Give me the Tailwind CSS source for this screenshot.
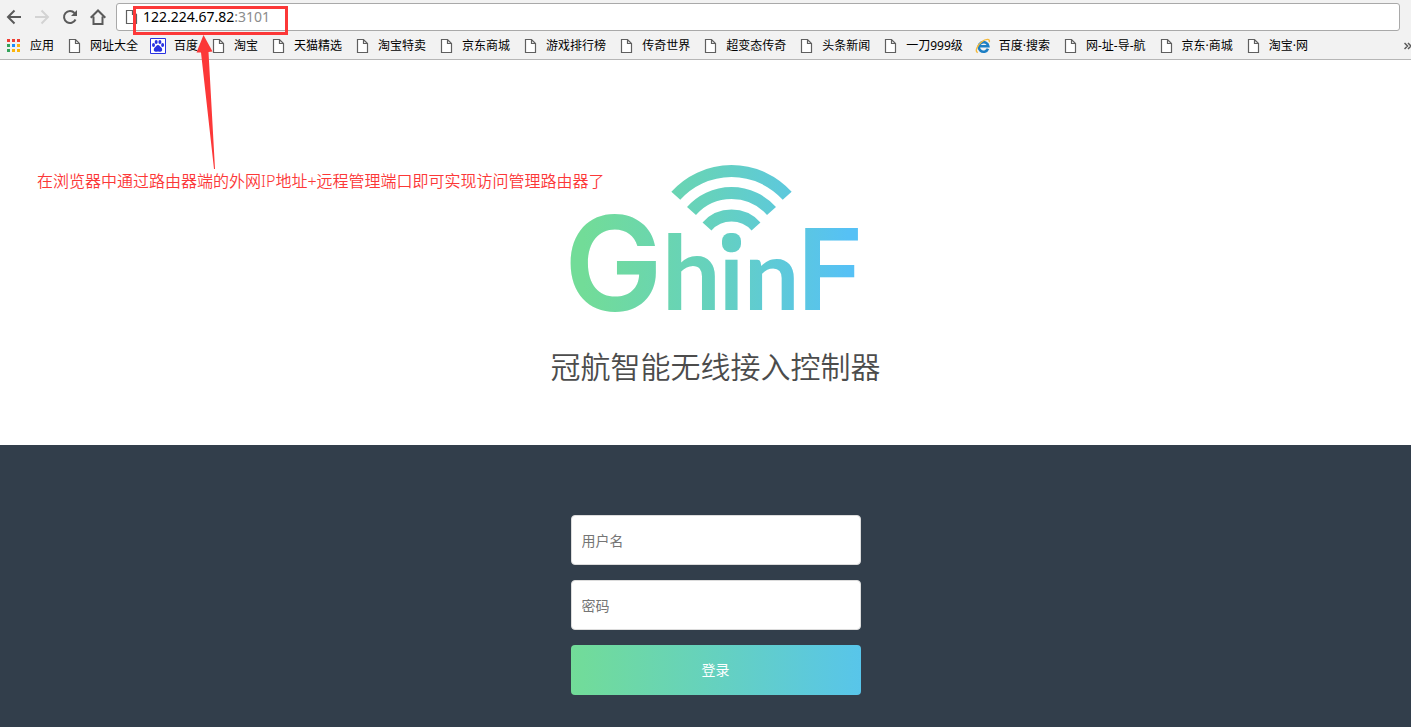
<!DOCTYPE html>
<html lang="zh-CN">
	<head>
		<meta charset="UTF-8" />
		<meta name="viewport" content="width=device-width, initial-scale=1.0" />
		<script src="https://cdn.jsdelivr.net/npm/@tailwindcss/browser@4"></script>
		<title>冠航智能无线接入控制器</title>
	</head>

	<body
		class="relative flex min-h-screen flex-col overflow-x-hidden bg-white font-['Noto_Sans','Noto_Sans_CJK_SC',sans-serif]"
	>
		<!-- shared bookmark page icon -->
		<svg class="hidden">
			<symbol id="page" viewBox="0 0 16 16">
				<path d="M3.500 1.500h6l4 4v9h-10z M9.500 1.500v4h4" fill="#fff" stroke="#5f5f5f" stroke-width="1.200" />
			</symbol>
		</svg>

		<header class="h-15 border-b border-[#b6b6b6] bg-[#f2f2f2]">
			<div class="flex items-center pt-[3px] pr-[11px] pl-1.5">
				<nav class="flex w-[110px] gap-3 text-[#5a5a5a]">
					<button aria-label="后退">
						<svg class="size-4" viewBox="0 0 16 16" fill="none" stroke="currentColor" stroke-width="2">
							<path d="M15 8H2.500M8.500 1.500L2 8l6.500 6.500" />
						</svg>
					</button>
					<button aria-label="前进" class="text-[#d3d3d3]" disabled>
						<svg class="size-4" viewBox="0 0 16 16" fill="none" stroke="currentColor" stroke-width="2">
							<path d="M1 8h12.500M7.500 1.500L14 8l-6.500 6.500" />
						</svg>
					</button>
					<button aria-label="刷新">
						<svg class="size-4" viewBox="0 0 16 16" fill="none" stroke="currentColor" stroke-width="2">
							<path d="M13.500 10.500A6 6 0 1 1 12.500 4" />
							<path d="M15 1v6H9z" fill="currentColor" stroke="none" />
						</svg>
					</button>
					<button aria-label="主页">
						<svg class="size-4" viewBox="0 0 16 16" fill="none" stroke="currentColor" stroke-width="2">
							<path d="M0.700 8.800L8 1.500l7.300 7.300M3.500 7.500V15h9V7.500" />
						</svg>
					</button>
				</nav>
				<div class="flex h-7 flex-1 items-center rounded-[3px] border border-[#a9a9a9] bg-white pl-1.5">
					<svg class="size-4"><use href="#page" /></svg>
					<a href="#" class="pl-1 text-sm leading-5 text-black"
						>122.224.67.82<span class="text-[#8c8c8c]">:3101</span></a
					>
				</div>
			</div>

			<nav class="flex h-[29px] items-center gap-3 pl-1.5 text-xs whitespace-nowrap text-black">
				<a href="#" class="flex items-center gap-2">
					<svg class="size-4" viewBox="0 0 16 16">
						<path d="M1 1h3v3H1zM6 1h3v3H6zM11 1h3v3h-3z" fill="#ee4035" />
						<path d="M1 6h3v3H1zM1 11h3v3H1z" fill="#33a35a" />
						<path d="M6 6h3v3H6z" fill="#1a8cff" />
						<path d="M11 6h3v3h-3zM6 11h3v3H6zM11 11h3v3h-3z" fill="#fbb40b" />
					</svg>
					应用
				</a>
				<a href="#" class="flex items-center gap-2"><svg class="size-4"><use href="#page" /></svg>网址大全</a>
				<a href="#" class="flex items-center gap-2">
					<svg class="size-4" viewBox="0 0 16 16" fill="#2932e1">
						<path d="M.5.500h15v15H.5z" fill="#fff" stroke="#2932e1" />
						<ellipse cx="3.500" cy="7" rx="1.500" ry="2" />
						<ellipse cx="6.200" cy="4" rx="1.500" ry="2" />
						<ellipse cx="9.900" cy="4" rx="1.500" ry="2" />
						<ellipse cx="12.600" cy="7" rx="1.500" ry="2" />
						<path d="M8 7c1.600 0 2 1.600 3.200 2.600 1.600 1.400 1.200 4.200-.8 4.200-1 0-1.500-.3-2.400-.3s-1.400.3-2.400.3c-2 0-2.400-2.800-.8-4.200C6 8.600 6.400 7 8 7z" />
					</svg>
					百度
				</a>
				<a href="#" class="flex items-center gap-2"><svg class="size-4"><use href="#page" /></svg>淘宝</a>
				<a href="#" class="flex items-center gap-2"><svg class="size-4"><use href="#page" /></svg>天猫精选</a>
				<a href="#" class="flex items-center gap-2"><svg class="size-4"><use href="#page" /></svg>淘宝特卖</a>
				<a href="#" class="flex items-center gap-2"><svg class="size-4"><use href="#page" /></svg>京东商城</a>
				<a href="#" class="flex items-center gap-2"><svg class="size-4"><use href="#page" /></svg>游戏排行榜</a>
				<a href="#" class="flex items-center gap-2"><svg class="size-4"><use href="#page" /></svg>传奇世界</a>
				<a href="#" class="flex items-center gap-2"><svg class="size-4"><use href="#page" /></svg>超变态传奇</a>
				<a href="#" class="flex items-center gap-2"><svg class="size-4"><use href="#page" /></svg>头条新闻</a>
				<a href="#" class="flex items-center gap-2"><svg class="size-4"><use href="#page" /></svg>一刀999级</a>
				<a href="#" class="flex items-center gap-2">
					<svg class="size-4" viewBox="0 0 16 16" fill="none">
						<path d="M13 10.800A4.800 4.800 0 1 1 13.300 8.300H5" stroke="#1d7fc4" stroke-width="2.600" />
						<path d="M2.800 14.500C-.5 14 2 7.500 6.500 4S15.500.500 14.200 4.200" stroke="#f3b93c" stroke-width="1.400" />
					</svg>
					百度·搜索
				</a>
				<a href="#" class="flex items-center gap-2"><svg class="size-4"><use href="#page" /></svg>网-址-导-航</a>
				<a href="#" class="flex items-center gap-2"><svg class="size-4"><use href="#page" /></svg>京东·商城</a>
				<a href="#" class="flex items-center gap-2"><svg class="size-4"><use href="#page" /></svg>淘宝·网</a>
				<button class="ml-auto" aria-label="更多书签">
					<svg class="h-2 w-[7px]" viewBox="0 0 7 8" fill="none" stroke="#5a5a5a" stroke-width="1.500">
						<path d="M.5 1l3 3-3 3M4 1l3 3-3 3" />
					</svg>
				</button>
			</nav>
		</header>

		<section class="flex h-[385px] flex-col items-center pt-[105px] pl-5">
			<svg class="h-[147px] w-[294px] overflow-visible" viewBox="569 165 294 147" role="img" aria-label="GhinF">
				<defs>
					<linearGradient id="brand" gradientUnits="userSpaceOnUse" x1="569" y1="0" x2="863" y2="0">
						<stop offset="0.050" stop-color="#72dc98" />
						<stop offset="0.500" stop-color="#65d1bf" />
						<stop offset="0.950" stop-color="#56c1f5" />
					</linearGradient>
				</defs>
				<g fill="none" stroke="url(#brand)" stroke-width="12">
					<path d="M675.800 195.800A75 75 0 0 1 787.200 195.800" />
					<path d="M691.500 211A53.500 53.500 0 0 1 771.500 211" />
					<path d="M707 226.500A33 33 0 0 1 756 226.500" />
				</g>
				<g fill="url(#brand)" class="font-['Lato',sans-serif] font-bold">
					<text x="564" y="311" font-size="132" class="font-['Inter',sans-serif] font-semibold">G</text>
					<text x="662" y="310" font-size="104">h</text>
					<text x="719" y="310" font-size="98">i</text>
					<text x="744" y="310" font-size="98">n</text>
					<text x="797" y="310" font-size="113" class="font-['Inter',sans-serif] font-semibold">F</text>
					<rect x="722" y="233" width="19" height="19" rx="8" />
				</g>
			</svg>
			<h1 class="mt-8 text-3xl leading-[45px] font-[350] text-[#4c4c4c]">冠航智能无线接入控制器</h1>
		</section>

		<main class="flex flex-1 justify-center bg-[#323e4b] pt-[70px] pl-5">
			<form class="flex w-[290px] flex-col gap-[15px] text-sm">
				<input
					type="text"
					name="username"
					aria-label="用户名"
					placeholder="用户名"
					class="h-[50px] rounded border border-[#dcdcdc] bg-white px-2.5 placeholder:text-[#757575]"
				/>
				<input
					type="password"
					name="password"
					aria-label="密码"
					placeholder="密码"
					class="h-[50px] rounded border border-[#dcdcdc] bg-white px-2.5 placeholder:text-[#757575]"
				/>
				<button
					type="button"
					class="h-[50px] rounded bg-[linear-gradient(to_right,#72dc98,#65d1bf_50%,#58c5ea)] text-white"
				>
					登录
				</button>
			</form>
		</main>

		<!-- red callout over the address bar -->
		<div class="absolute top-1.5 left-[133px] h-[29px] w-[155px] border-3 border-[#fc3838]"></div>
		<svg class="absolute top-[35px] left-[196px] h-[135px] w-5" viewBox="196 35 20 135" fill="#fc3838">
			<path d="M203.500 35L212.500 51.500L208.500 52L215 169H214L201 52.500L196.500 52.500z" />
		</svg>
		<p class="absolute top-[169px] left-[37px] text-base leading-6 font-[350] whitespace-nowrap text-[#fc3838]">
			在浏览器中通过路由器端的外网IP地址+远程管理端口即可实现访问管理路由器了
		</p>
	</body>
</html>
